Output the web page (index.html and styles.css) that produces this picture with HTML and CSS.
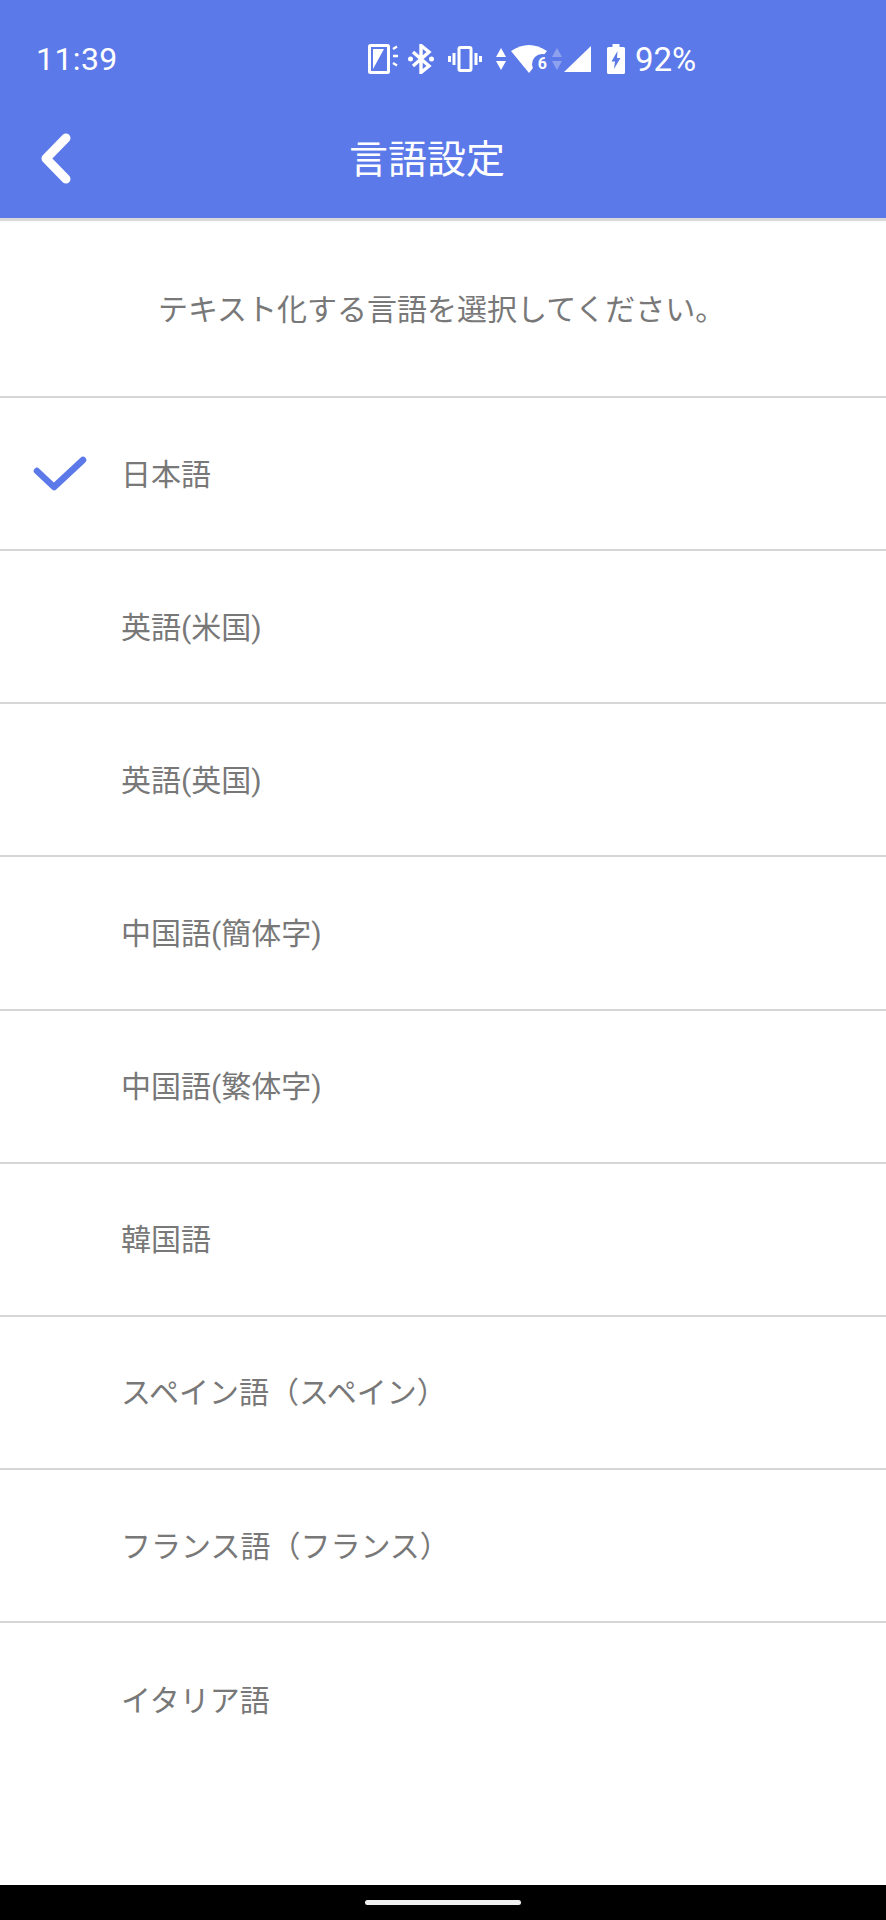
FILE: index.html
```html
<!DOCTYPE html>
<html lang="ja">
<head>
    <meta name="viewport" content="width=device-width, initial-scale=1">
    <title>言語設定</title>
    <link rel="stylesheet" href="styles.css">
</head>
<body>
    <div class="screen">
        <header class="app-header">
            <div class="status-bar">
                <span class="status-time">11:39</span>
                <div class="status-icons">
                    <svg class="icon-flash" width="32" height="30" viewBox="0 0 32 30" fill="none">
                        <rect x="1.500" y="1.500" width="19" height="27" rx="1" stroke="#fff" stroke-width="3"/>
                        <path d="M5 25V5h11z" fill="#fff"/>
                        <path d="M25 5l4-2.500M25 12h5M25 19l4 2.500" stroke="#fff" stroke-width="2.400"/>
                    </svg>
                    <svg class="icon-bt" width="26" height="30" viewBox="0 0 26 30" fill="none">
                        <path d="M5 8l16 14-8 6.500V1.500L21 8 5 22" stroke="#fff" stroke-width="3.400"/>
                        <circle cx="2.500" cy="15" r="2.500" fill="#fff"/>
                        <circle cx="23.500" cy="15" r="2.500" fill="#fff"/>
                    </svg>
                    <svg class="icon-vibrate" width="34" height="26" viewBox="0 0 34 26" fill="none">
                        <rect x="11" y="1.500" width="12" height="23" rx="1.500" stroke="#fff" stroke-width="3"/>
                        <path d="M6 7v12M1.500 10v6M28 7v12M32.500 10v6" stroke="#fff" stroke-width="3"/>
                    </svg>
                    <svg class="icon-arrows" width="10" height="22" viewBox="0 0 10 22">
                        <path d="M5 0l5 9H0zM5 22l5-9H0z" fill="#fff"/>
                    </svg>
                    <div class="wifi">
                        <svg width="36" height="28" viewBox="0 0 36 28">
                            <path d="M0 6Q18-6 36 6L18 28z" fill="#fff"/>
                            <circle cx="31" cy="19" r="10" fill="#5c79e9"/>
                        </svg>
                        <span class="wifi-six">6</span>
                    </div>
                    <svg class="icon-arrows-dim" width="10" height="22" viewBox="0 0 10 22">
                        <path d="M5 0l5 9H0zM5 22l5-9H0z" fill="#fff"/>
                    </svg>
                    <svg class="icon-signal" width="27" height="26" viewBox="0 0 27 26">
                        <path d="M27 0v26H0z" fill="#fff"/>
                    </svg>
                    <svg class="icon-battery" width="18" height="30" viewBox="0 0 18 30">
                        <path d="M5.500 0h7v3h4a1.500 1.500 0 0 1 1.500 1.500v24a1.500 1.500 0 0 1-1.500 1.500h-15A1.500 1.500 0 0 1 0 28.500v-24A1.500 1.500 0 0 1 1.500 3h4z" fill="#fff"/>
                        <path d="M10.500 7L4.500 17.500H8L7 25l6.500-11H10z" fill="#5c79e9"/>
                    </svg>
                    <span class="status-percent">92%</span>
                </div>
            </div>
            <div class="title-bar">
                <a href="#" class="back-btn" aria-label="戻る">
                    <svg width="36" height="54" viewBox="0 0 36 54" fill="none">
                        <path d="M28 6L8 26.500 28 47" stroke="#fff" stroke-width="9" stroke-linecap="round" stroke-linejoin="round"/>
                    </svg>
                </a>
                <h1 class="page-title">言語設定</h1>
            </div>
        </header>

        <p class="intro">テキスト化する言語を選択してください。</p>

        <ul class="lang-list">
            <li class="lang-row selected">
                <svg class="check" width="54" height="40" viewBox="0 0 54 40" fill="none">
                    <path d="M4 17l17 16L50 6" stroke="#5c79e9" stroke-width="6.500" stroke-linecap="round" stroke-linejoin="round"/>
                </svg>
                <span>日本語</span>
            </li>
            <li class="lang-row"><span>英語(米国)</span></li>
            <li class="lang-row"><span>英語(英国)</span></li>
            <li class="lang-row"><span>中国語(簡体字)</span></li>
            <li class="lang-row"><span>中国語(繁体字)</span></li>
            <li class="lang-row"><span>韓国語</span></li>
            <li class="lang-row"><span>スペイン語（スペイン）</span></li>
            <li class="lang-row"><span>フランス語（フランス）</span></li>
            <li class="lang-row last"><span>イタリア語</span></li>
        </ul>

        <div class="nav-bar"><div class="nav-handle"></div></div>
    </div>
</body>
</html>
```
FILE: styles.css
```css
* {
    box-sizing: border-box;
}

body {
    margin: 0;
    background: #fff;
    font-family: Roboto, "Noto Sans CJK JP", sans-serif;
}

.screen {
    display: flex;
    flex-direction: column;
    width: 886px;
    height: 1920px;
    overflow: hidden;
}

.app-header {
    height: 221px;
    background: #5c79e9;
    border-bottom: 3px solid #d9d9dc;
    color: #fff;
}

.status-bar {
    display: flex;
    align-items: center;
    height: 118px;
    padding: 0 0 0 36px;
}

.status-time {
    font-size: 32px;
    width: 332px;
    letter-spacing: 0.4px;
}

.status-icons {
    display: flex;
    align-items: center;
}

.icon-bt {
    margin-left: 8px;
}

.icon-vibrate {
    margin-left: 14px;
}

.icon-arrows {
    margin-left: 14px;
}

.wifi {
    position: relative;
    display: flex;
    margin-left: 5px;
}

.wifi-six {
    position: absolute;
    right: 0;
    bottom: 2px;
    font-size: 16px;
    line-height: 15px;
    font-weight: 700;
}

.icon-arrows-dim {
    margin-left: 5px;
    opacity: 0.3;
}

.icon-signal {
    margin-left: 2px;
}

.icon-battery {
    margin-left: 16px;
}

.status-percent {
    font-size: 33px;
    margin-left: 10px;
}

.title-bar {
    display: flex;
    align-items: center;
    justify-content: center;
    position: relative;
    height: 100px;
    padding-bottom: 24px;
    padding-right: 32px;
}

.back-btn {
    position: absolute;
    left: 38px;
    top: 14px;
    line-height: 0;
}

.page-title {
    margin: 0;
    font-size: 39px;
    font-weight: 400;
}

.intro {
    display: flex;
    align-items: center;
    height: 177px;
    margin: 0;
    padding: 0 0 4px 158px;
    font-size: 30px;
    color: #787878;
    border-bottom: 2px solid #d6d6d6;
}

.lang-list {
    list-style: none;
    margin: 0;
    padding: 0;
    flex: 1;
}

.lang-row {
    position: relative;
    display: flex;
    align-items: center;
    height: 153.15px;
    padding: 0 0 4px 121px;
    font-size: 30px;
    color: #787878;
    border-bottom: 2px solid #d6d6d6;
}

.lang-row.last {
    border-bottom: none;
}

.check {
    position: absolute;
    left: 33px;
    top: 56px;
}

.nav-bar {
    display: flex;
    justify-content: center;
    align-items: center;
    height: 35px;
    background: #000;
}

.nav-handle {
    width: 156px;
    height: 5px;
    border-radius: 3px;
    background: #f0f0f0;
}
```
